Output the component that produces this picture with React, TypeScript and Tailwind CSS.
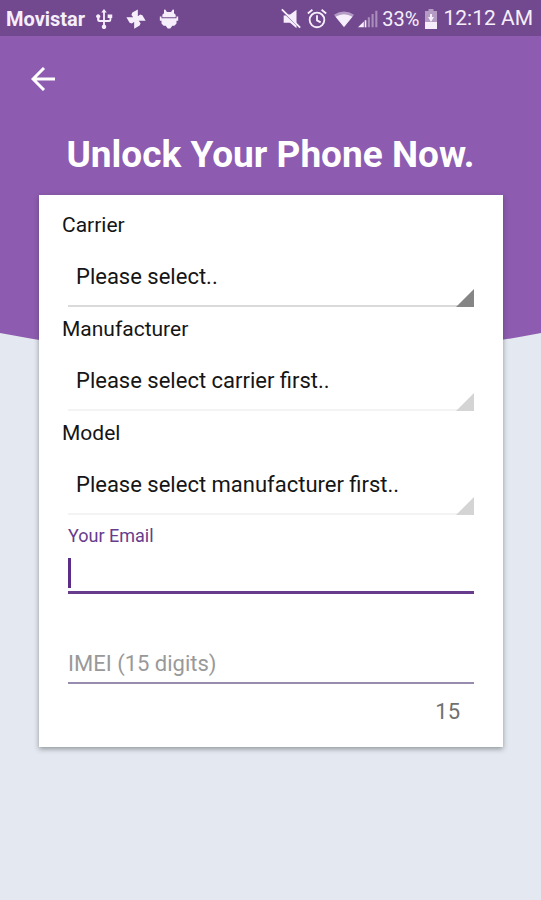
import type { ReactNode } from 'react';

type PickerProps = {
  id: string;
  label: string;
  placeholder: string;
  disabled?: boolean;
};

function Picker({ id, label, placeholder, disabled = false }: PickerProps) {
  return (
    <div>
      <label htmlFor={id} className="block text-[21px] leading-7 text-[#151515]">
        {label}
      </label>
      <div className="relative ml-1.5">
        <select
          id={id}
          disabled={disabled}
          className={`block h-17 w-full appearance-none rounded-none border-b-2 bg-transparent pt-2 pr-6 pl-2 text-[22px] text-[#151515] opacity-100 outline-none ${
            disabled ? 'border-[#f3f3f3]' : 'border-[#dadada]'
          }`}
        >
          <option>{placeholder}</option>
        </select>
        <svg
          aria-hidden="true"
          viewBox="0 0 18 18"
          className={`pointer-events-none absolute right-0 bottom-0 size-[18px] ${
            disabled ? 'text-[#d4d4d4]' : 'text-[#858585]'
          }`}
        >
          <path d="M18 0V18H0z" fill="currentColor" />
        </svg>
      </div>
    </div>
  );
}

function Glyph({ children, className }: { children: ReactNode; className: string }) {
  return (
    <svg viewBox="0 0 24 24" fill="currentColor" aria-hidden="true" className={`shrink-0 ${className}`}>
      {children}
    </svg>
  );
}

function StatusBar() {
  return (
    <div className="flex h-9 items-center justify-between bg-[#72488f] pt-0.5 pr-2 pl-1.5 text-xl text-[#f6effb]">
      <div className="flex items-center">
        <span className="font-bold">Movistar</span>
        <Glyph className="ml-2 size-[22px]">
          <path d="M16 7v4h2v2h-5V5h2l-3-4-3 4h2v8H7v-2.100A2.200 2.200 0 1 0 4.500 11v2A2.500 2.500 0 0 0 7 15.300h4v3a2.400 2.400 0 1 0 2 0v-3h4.500a2.500 2.500 0 0 0 2.500-2.500V11h1V7z" />
        </Glyph>
        <Glyph className="ml-2.5 size-[22px]">
          <path d="M14 12V1.500L8 5 7 7.500 10.500 12zM12 14h10.500L19 8l-2.500-1L12 10.500zM10 12v10.500l6-3.500 1-2.500L13.500 12zM12 10H1.500L5 16l2.500 1 4.500-3.500z" />
          <circle cx="12" cy="12" r="3" />
        </Glyph>
        <Glyph className="ml-3 size-5">
          <path d="M4 9.800V7l2-2V1l1.500-.5L9.500 3.500h5l2-3L18 1v4l2 2v2.800z" />
          <path d="M1 9h2v2h18V9h2v5h-2v3.500L18.500 20H16l-2.500 3.500h-3L8 20H5.500L3 17.500V14H1z" />
        </Glyph>
      </div>
      <div className="flex items-center">
        <Glyph className="size-[22px]">
          <path d="M18 2v14.500L7.500 7.200 11 7zM4 8.200h2.500L18 19v3l-7-6H4z" />
          <path d="M2 1.500 22 21.500" stroke="currentColor" strokeWidth="2" />
        </Glyph>
        <Glyph className="ml-1 size-[22px]">
          <g fill="none" stroke="currentColor" strokeWidth="2">
            <circle cx="12" cy="13" r="8" />
            <path d="M12 8v5.500l4 2.200M2 6l5-4M22 6l-5-4" />
          </g>
        </Glyph>
        <Glyph className="ml-1.5 size-5">
          <path opacity=".5" d="M12 21.500 0 7Q12-1 24 7z" />
          <path d="M12 21.500 1.800 9.300Q12 3 22.200 9.300z" />
        </Glyph>
        <Glyph className="ml-1 size-5">
          <path d="M0 22 7 15v7z" />
          <path d="M9 13.500v8.500" stroke="currentColor" strokeWidth="2" />
          <g stroke="currentColor" strokeWidth="2.500" opacity=".42">
            <path d="M13 10v12M17.500 6v16M22 2v20" />
          </g>
        </Glyph>
        <span className="ml-1">33%</span>
        <svg viewBox="0 0 12 20" fill="currentColor" aria-hidden="true" className="ml-1.5 h-5 w-3 shrink-0">
          <path opacity=".5" d="M3.500 0h5v2H12v11H0V2h3.500z" />
          <path d="M0 13h12v7H0z" />
          <path d="M5 5h2v3h2l-3 5-3-5h2z" />
        </svg>
        <span className="ml-1.5 text-[21px]">12:12 AM</span>
      </div>
    </div>
  );
}

export default function App() {
  return (
    <div className="relative isolate min-h-screen bg-[#e4e8f0] font-[Roboto,sans-serif]">
      <svg
        aria-hidden="true"
        viewBox="0 0 540 360"
        preserveAspectRatio="none"
        className="absolute inset-x-0 top-0 -z-10 h-[360px] w-full"
      >
        <path d="M0 0H540V333Q270 385 0 333z" fill="#8d5bb0" />
      </svg>

      <StatusBar />

      <header>
        <button type="button" aria-label="Back" className="mt-[21px] ml-[21px] flex size-11 items-center justify-center text-white">
          <svg viewBox="0 0 24 24" fill="none" stroke="currentColor" strokeWidth="3" aria-hidden="true" className="size-6">
            <path d="M24 12H2M13 1 2 12l11 11" />
          </svg>
        </button>
        <h1 className="mt-8 text-center text-[37px] leading-11 font-bold text-white">Unlock Your Phone Now.</h1>
      </header>

      <main className="mr-[38px] ml-[39px] mt-[18px] bg-white px-6 pt-4 pb-[21px] shadow-[0_2px_5px_rgba(40,50,50,0.45)]">
        <form className="-ml-px mr-[5px]">
          <div className="flex flex-col gap-2">
            <Picker id="carrier" label="Carrier" placeholder="Please select.." />
            <Picker id="manufacturer" label="Manufacturer" placeholder="Please select carrier first.." disabled />
            <Picker id="model" label="Model" placeholder="Please select manufacturer first.." disabled />
          </div>

          <div className="mt-[7px] ml-1.5">
            <label htmlFor="email" className="block text-lg leading-7 text-[#683c8c]">
              Your Email
            </label>
            <div className="relative">
              <input
                id="email"
                type="email"
                className="block h-11 w-full rounded-none border-b-3 border-[#683c8c] bg-transparent text-[22px] caret-[#5c2d86] outline-none"
              />
              <span aria-hidden="true" className="pointer-events-none absolute top-2 left-0 h-[30px] w-[3px] bg-[#5c2d86]" />
            </div>
          </div>

          <div className="mt-12 ml-1.5">
            <input
              id="imei"
              type="text"
              inputMode="numeric"
              maxLength={15}
              aria-label="IMEI (15 digits)"
              placeholder="IMEI (15 digits)"
              className="block h-[42px] w-full rounded-none border-b-2 border-[#978bae] bg-transparent pt-0.5 text-[22px] outline-none placeholder:text-[#999999]"
            />
            <output htmlFor="imei" className="mt-3.5 block pr-3.5 text-right text-[22px] leading-7 text-[#707070]">
              15
            </output>
          </div>
        </form>
      </main>
    </div>
  );
}
